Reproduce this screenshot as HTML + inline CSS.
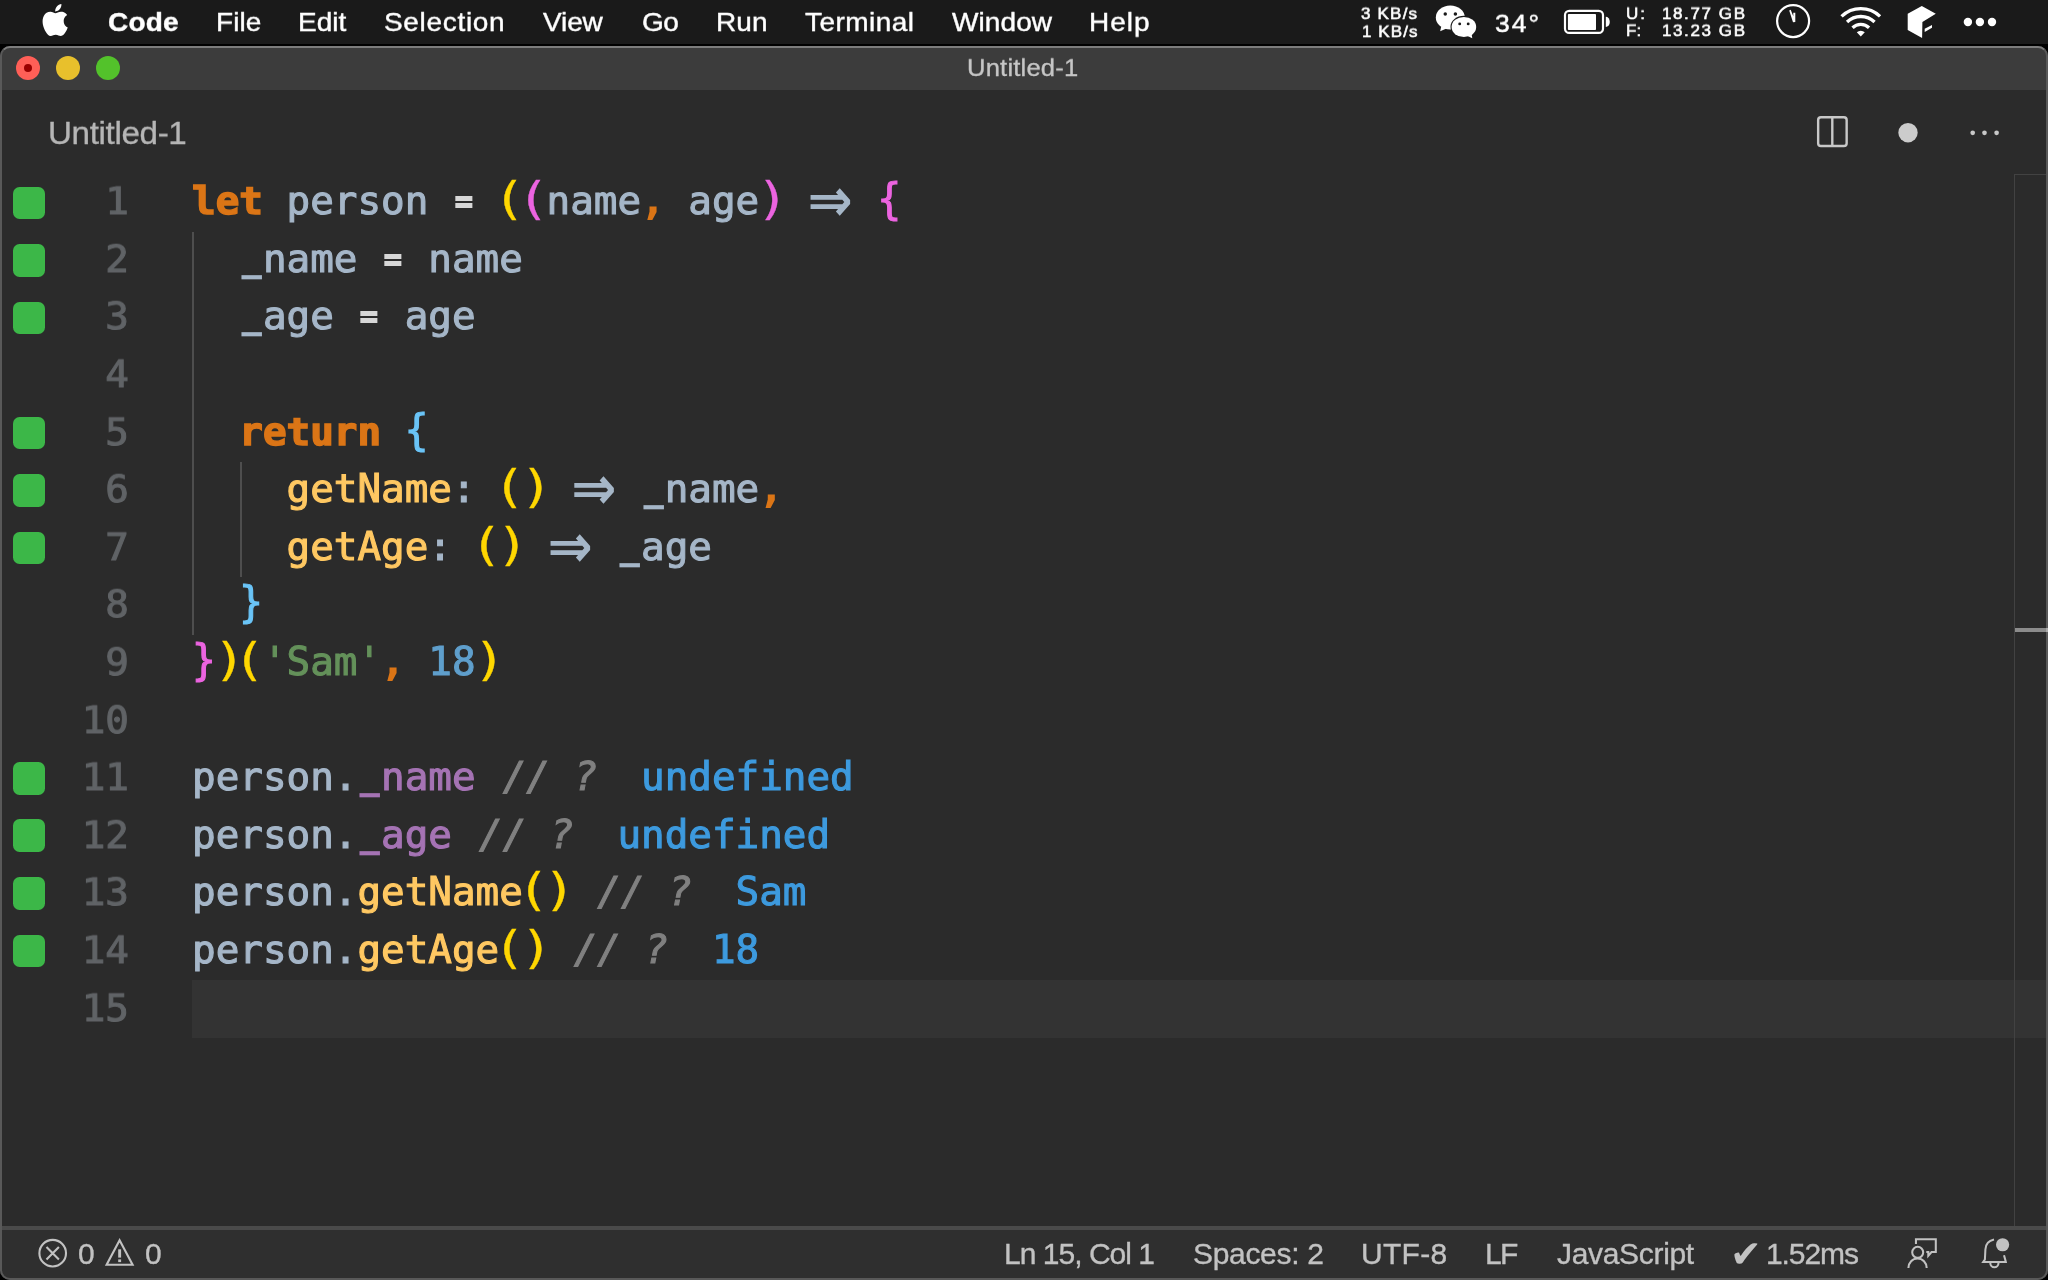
<!DOCTYPE html>
<html><head><meta charset="utf-8"><title>Untitled-1</title>
<style>
*{margin:0;padding:0;box-sizing:border-box}
html,body{width:2048px;height:1280px;overflow:hidden;background:#000}
body{position:relative;font-family:"Liberation Sans",sans-serif}
.abs{position:absolute}
#menubar{position:absolute;left:0;top:0;width:2048px;height:44px;background:#1a1a1a}
.t,.cl,.ln{will-change:transform}
.cl,.ln{-webkit-text-stroke:1.1px}
.kw{-webkit-text-stroke:1.5px}
.t{position:absolute;height:60px;line-height:60px;white-space:pre;font-family:"Liberation Sans",sans-serif}
#win{position:absolute;left:0;top:46px;width:2048px;height:1234px;background:#2b2b2b;border-radius:10px;overflow:hidden}
#winborder{position:absolute;left:0;top:46px;width:2048px;height:1234px;border-radius:10px;border:2px solid #595959;border-top-color:#7c7c7c}
#titlebar{position:absolute;left:0;top:0;width:100%;height:43.7px;background:#3c3c3c}
.tl{position:absolute;top:56px;width:24px;height:24px;border-radius:50%}
.cl{position:absolute;left:192px;height:57.6px;line-height:57.6px;font-family:"DejaVu Sans Mono","Liberation Mono",monospace;font-size:39.25px;white-space:pre;color:#a5b6c8}
.ln{position:absolute;left:41px;width:88px;text-align:right;height:57.6px;line-height:57.6px;font-family:"DejaVu Sans Mono","Liberation Mono",monospace;font-size:39.25px;color:#606366;transform:scaleY(0.945);transform-origin:50% 42.4px}
.sq{position:absolute;left:12.8px;width:32.5px;height:32.8px;border-radius:6.5px;background:#3cb748}
.kw{color:#db7516;font-weight:bold;display:inline-block;transform:translateY(0.5px) scaleY(0.95)}
.kwn{color:#db7516;-webkit-text-stroke:2.2px}
.var{color:#a5b6c8}
.op{color:#d7d7d7;display:inline-block;transform:translateY(-0.3px) scale(0.75,0.92);-webkit-text-stroke:2.4px}
.us{display:inline-block;transform:translate(0.8px,-2.6px) scaleX(0.78);-webkit-text-stroke:2.6px}
.gold{color:#ffd700}
.pink{color:#ec64e0}
.sky{color:#6ac4f7}
.fn{color:#ffc862}
.str{color:#64915a}
.num{color:#5f9fcc}
.prop{color:#a573b4}
.com{color:#808080;font-style:italic;display:inline-block;transform:translateX(3.5px)}
.res{color:#3d9ade}
.arw{display:inline-block;position:relative;width:2ch;height:1em;vertical-align:baseline;color:#a5b6c7}
.arw i{position:absolute;left:0;top:6px;width:100%;text-align:center;font-style:normal;font-family:"DejaVu Sans",sans-serif;font-weight:bold;font-size:54px;line-height:40px;-webkit-text-stroke:0;transform:scaleY(1.12);transform-origin:50% 50%}
.pl,.pr,.bc{display:inline-block}
.pl{transform:translate(-1.6px,-1.6px) scale(1.35,1.11);-webkit-text-stroke:0.3px}
.pr{transform:translate(1.6px,-1.6px) scale(1.35,1.11);-webkit-text-stroke:0.3px}
.bc{transform:translate(0,-1.8px) scale(1,1.1)}
.guide{position:absolute;width:2px;background:#4e4e4e}
#curline{position:absolute;left:192px;top:980px;width:1855px;height:58px;background:#333333}
#sbline{position:absolute;left:2014px;top:174px;width:1px;height:1052px;background:#424242}
#sbtop{position:absolute;left:2014px;top:174px;width:33px;height:1px;background:#424242}
#cursormark{position:absolute;left:2015px;top:628.2px;width:31px;height:4px;background:#8c8c8c}
#cursormark2{position:absolute;left:2046px;top:628.2px;width:2px;height:4px;background:#aaa}
#statusline{position:absolute;left:0;top:1180px;width:100%;height:4px;background:#4a4a4a}
#status{position:absolute;left:0;top:1184px;width:100%;height:50px;background:#2f2f2f}
#icons{position:absolute;left:0;top:0}
</style></head>
<body>
<div id="menubar"></div>
<div id="win">
 <div id="titlebar"></div>
 <div id="statusline"></div>
 <div id="status"></div>
</div>
<div class="tl" style="left:16px;background:#ff5f57"><div style="position:absolute;left:8px;top:8px;width:8px;height:8px;border-radius:50%;background:#990000"></div></div>
<div class="tl" style="left:56px;background:#e8c02c"></div>
<div class="tl" style="left:96px;background:#53c22b"></div>
<div id="curline"></div>
<div id="sbline"></div><div id="sbtop"></div><div id="cursormark"></div>
<div class="guide" style="left:192px;top:232px;height:402.5px"></div>
<div class="guide" style="left:239.5px;top:462.2px;height:115.2px"></div>
<div class="t" style="left:108.3px;top:-8.5px;font-size:28px;letter-spacing:0.23px;color:#fff;font-weight:bold;-webkit-text-stroke:0.45px;transform:scaleY(0.95);transform-origin:0 39.7px">Code</div>
<div class="t" style="left:216.0px;top:-8.5px;font-size:28px;letter-spacing:0.07px;color:#fff;-webkit-text-stroke:0.45px;transform:scaleY(0.95);transform-origin:0 39.7px">File</div>
<div class="t" style="left:297.8px;top:-8.5px;font-size:28px;letter-spacing:-0.03px;color:#fff;-webkit-text-stroke:0.45px;transform:scaleY(0.95);transform-origin:0 39.7px">Edit</div>
<div class="t" style="left:384.2px;top:-8.5px;font-size:28px;letter-spacing:0.68px;color:#fff;-webkit-text-stroke:0.45px;transform:scaleY(0.95);transform-origin:0 39.7px">Selection</div>
<div class="t" style="left:543.4px;top:-8.5px;font-size:28px;letter-spacing:-0.13px;color:#fff;-webkit-text-stroke:0.45px;transform:scaleY(0.95);transform-origin:0 39.7px">View</div>
<div class="t" style="left:642.0px;top:-8.5px;font-size:28px;letter-spacing:-0.6px;color:#fff;-webkit-text-stroke:0.45px;transform:scaleY(0.95);transform-origin:0 39.7px">Go</div>
<div class="t" style="left:716.0px;top:-8.5px;font-size:28px;letter-spacing:0.15px;color:#fff;-webkit-text-stroke:0.45px;transform:scaleY(0.95);transform-origin:0 39.7px">Run</div>
<div class="t" style="left:805.4px;top:-8.5px;font-size:28px;letter-spacing:0.46px;color:#fff;-webkit-text-stroke:0.45px;transform:scaleY(0.95);transform-origin:0 39.7px">Terminal</div>
<div class="t" style="left:951.5px;top:-8.5px;font-size:28px;letter-spacing:0.1px;color:#fff;-webkit-text-stroke:0.45px;transform:scaleY(0.95);transform-origin:0 39.7px">Window</div>
<div class="t" style="left:1089.0px;top:-8.5px;font-size:28px;letter-spacing:1.0px;color:#fff;-webkit-text-stroke:0.45px;transform:scaleY(0.95);transform-origin:0 39.7px">Help</div>
<div class="t" style="left:1361.0px;top:-16.4px;font-size:17px;letter-spacing:1.2px;color:#fff;-webkit-text-stroke:0.6px;transform:scaleY(0.96);transform-origin:0 35.9px">3 KB/s</div>
<div class="t" style="left:1361.6px;top:1.6px;font-size:17px;letter-spacing:1.08px;color:#fff;-webkit-text-stroke:0.6px;transform:scaleY(0.96);transform-origin:0 35.9px">1 KB/s</div>
<div class="t" style="left:1494.5px;top:-7.2px;font-size:26.5px;letter-spacing:2.05px;color:#fff;-webkit-text-stroke:0.5px;transform:scaleY(0.96);transform-origin:0 39.2px">34°</div>
<div class="t" style="left:1625.8px;top:-16.4px;font-size:17px;letter-spacing:2.0px;color:#fff;-webkit-text-stroke:0.6px;transform:scaleY(0.96);transform-origin:0 35.9px">U:</div>
<div class="t" style="left:1626.4px;top:1.4px;font-size:17px;letter-spacing:0.1px;color:#fff;-webkit-text-stroke:0.6px;transform:scaleY(0.96);transform-origin:0 35.9px">F:</div>
<div class="t" style="left:1662.4px;top:-16.4px;font-size:17px;letter-spacing:1.6px;color:#fff;-webkit-text-stroke:0.6px;transform:scaleY(0.96);transform-origin:0 35.9px">18.77 GB</div>
<div class="t" style="left:1662.4px;top:1.4px;font-size:17px;letter-spacing:1.6px;color:#fff;-webkit-text-stroke:0.6px;transform:scaleY(0.96);transform-origin:0 35.9px">13.23 GB</div>
<div class="t" style="left:966.6px;top:37.1px;font-size:25.6px;letter-spacing:0.19px;color:#c6c6c6;-webkit-text-stroke:0.35px;transform:scaleY(0.93);transform-origin:0 38.9px">Untitled-1</div>
<div class="t" style="left:47.5px;top:102.5px;font-size:33.2px;letter-spacing:-0.36px;color:#b6b6b6;-webkit-text-stroke:0.35px;transform:scaleY(0.96);transform-origin:0 41.5px">Untitled-1</div>
<div class="t" style="left:78.0px;top:1223.5px;font-size:30px;letter-spacing:0.0px;color:#c2c2c2;-webkit-text-stroke:0.35px">0</div>
<div class="t" style="left:144.5px;top:1223.5px;font-size:30px;letter-spacing:0.0px;color:#c2c2c2;-webkit-text-stroke:0.35px">0</div>
<div class="t" style="left:1003.6px;top:1223.5px;font-size:30px;letter-spacing:-0.98px;color:#c2c2c2;-webkit-text-stroke:0.35px">Ln 15, Col 1</div>
<div class="t" style="left:1193.0px;top:1223.5px;font-size:30px;letter-spacing:-0.32px;color:#c2c2c2;-webkit-text-stroke:0.35px">Spaces: 2</div>
<div class="t" style="left:1361.3px;top:1223.5px;font-size:30px;letter-spacing:0.3px;color:#c2c2c2;-webkit-text-stroke:0.35px">UTF-8</div>
<div class="t" style="left:1485.3px;top:1223.5px;font-size:30px;letter-spacing:-1.6px;color:#c2c2c2;-webkit-text-stroke:0.35px">LF</div>
<div class="t" style="left:1557.3px;top:1223.5px;font-size:30px;letter-spacing:-0.32px;color:#c2c2c2;-webkit-text-stroke:0.35px">JavaScript</div>
<div class="t" style="left:1765.7px;top:1223.5px;font-size:30px;letter-spacing:-1.08px;color:#c2c2c2;-webkit-text-stroke:0.35px">1.52ms</div>
<div class="t" style="left:1729.8px;top:1223.9px;font-family:'DejaVu Sans',sans-serif;font-size:37.9px;color:#c2c2c2">✔</div>
<div class="sq" style="top:186.5px"></div>
<div class="ln" style="top:172.2px">1</div>
<div class="cl" style="top:172.2px"><span class="kw">let</span><span class="var"> person </span><span class="op">=</span> <span class="gold pl">(</span><span class="pink pl">(</span><span class="var">name</span><span class="kwn">,</span><span class="var"> age</span><span class="pink pr">)</span> <span class="arw"><i>⇒</i></span> <span class="pink bc">{</span></div>
<div class="sq" style="top:244.0px"></div>
<div class="ln" style="top:229.8px">2</div>
<div class="cl" style="top:229.8px"><span class="var">  <span class="us">_</span>name </span><span class="op">=</span><span class="var"> name</span></div>
<div class="sq" style="top:301.6px"></div>
<div class="ln" style="top:287.4px">3</div>
<div class="cl" style="top:287.4px"><span class="var">  <span class="us">_</span>age </span><span class="op">=</span><span class="var"> age</span></div>
<div class="ln" style="top:345.0px">4</div>
<div class="sq" style="top:416.7px"></div>
<div class="ln" style="top:402.6px">5</div>
<div class="cl" style="top:402.6px">  <span class="kw">return</span> <span class="sky bc">{</span></div>
<div class="sq" style="top:474.2px"></div>
<div class="ln" style="top:460.2px">6</div>
<div class="cl" style="top:460.2px">    <span class="fn">getName</span><span class="var">:</span> <span class="gold pl">(</span><span class="gold pr">)</span> <span class="arw"><i>⇒</i></span><span class="var"> <span class="us">_</span>name</span><span class="kwn">,</span></div>
<div class="sq" style="top:531.7px"></div>
<div class="ln" style="top:517.8px">7</div>
<div class="cl" style="top:517.8px">    <span class="fn">getAge</span><span class="var">:</span> <span class="gold pl">(</span><span class="gold pr">)</span> <span class="arw"><i>⇒</i></span><span class="var"> <span class="us">_</span>age</span></div>
<div class="ln" style="top:575.4px">8</div>
<div class="cl" style="top:575.4px">  <span class="sky bc">}</span></div>
<div class="ln" style="top:633.0px">9</div>
<div class="cl" style="top:633.0px"><span class="pink bc">}</span><span class="gold pr">)</span><span class="gold pl">(</span><span class="str">'Sam'</span><span class="kwn">,</span> <span class="num">18</span><span class="gold pr">)</span></div>
<div class="ln" style="top:690.6px">10</div>
<div class="sq" style="top:761.9px"></div>
<div class="ln" style="top:748.2px">11</div>
<div class="cl" style="top:748.2px"><span class="var">person.</span><span class="prop"><span class="us">_</span>name</span> <span class="com">// ?</span>  <span class="res">undefined</span></div>
<div class="sq" style="top:819.4px"></div>
<div class="ln" style="top:805.8px">12</div>
<div class="cl" style="top:805.8px"><span class="var">person.</span><span class="prop"><span class="us">_</span>age</span> <span class="com">// ?</span>  <span class="res">undefined</span></div>
<div class="sq" style="top:877.0px"></div>
<div class="ln" style="top:863.4px">13</div>
<div class="cl" style="top:863.4px"><span class="var">person.</span><span class="fn">getName</span><span class="gold pl">(</span><span class="gold pr">)</span> <span class="com">// ?</span>  <span class="res">Sam</span></div>
<div class="sq" style="top:934.5px"></div>
<div class="ln" style="top:921.0px">14</div>
<div class="cl" style="top:921.0px"><span class="var">person.</span><span class="fn">getAge</span><span class="gold pl">(</span><span class="gold pr">)</span> <span class="com">// ?</span>  <span class="res">18</span></div>
<div class="ln" style="top:978.6px">15</div>
<div id="winborder"></div><div id="cursormark2"></div>
<svg id="icons" width="2048" height="1280" viewBox="0 0 2048 1280">
<!-- apple -->
<path fill="#fff" transform="translate(43.24,1.42) scale(1.10,1.145)" d="M18.6 17.2c0-3.600 2.900-5.300 3.100-5.400-1.700-2.400-4.300-2.800-5.200-2.800-2.200-.2-4.300 1.300-5.400 1.300s-2.800-1.300-4.700-1.200c-2.400 0-4.600 1.400-5.800 3.500-2.500 4.300-.6 10.600 1.800 14.100 1.200 1.700 2.600 3.600 4.400 3.500 1.800-.1 2.500-1.100 4.600-1.100 2.100 0 2.800 1.100 4.600 1.100 1.900 0 3.100-1.700 4.300-3.400 1.300-2 1.900-3.900 1.900-4-.1 0-3.600-1.400-3.600-5.600zM15.100 6.700c1-1.200 1.600-2.800 1.400-4.400-1.400.1-3.100.9-4.100 2.100-.9 1-1.700 2.700-1.500 4.300 1.600.1 3.200-.8 4.200-2z"/>
<!-- wechat -->
<g>
<ellipse cx="1450.3" cy="17.6" rx="14.5" ry="12" fill="#fff"/>
<path d="M1441.200 26.500 L1440.200 31.300 L1446.500 28.600 Z" fill="#fff"/>
<circle cx="1445.250" cy="13.9" r="1.75" fill="#1a1a1a"/><circle cx="1455.400" cy="13.9" r="1.75" fill="#1a1a1a"/>
<ellipse cx="1463.900" cy="27" rx="13.4" ry="11.2" fill="#1a1a1a"/>
<ellipse cx="1463.900" cy="27" rx="12.3" ry="10.100" fill="#fff"/>
<path d="M1466.500 35.500 L1472.300 38.200 L1471.500 33.500 Z" fill="#fff"/>
<circle cx="1459.700" cy="23.900" r="1.45" fill="#1a1a1a"/><circle cx="1468.200" cy="23.900" r="1.45" fill="#1a1a1a"/>
</g>
<!-- battery -->
<rect x="1565" y="10.900" width="38" height="22" rx="4.2" fill="none" stroke="#fff" stroke-width="2.2"/>
<rect x="1567.900" y="13.900" width="28.100" height="16.200" rx="0.8" fill="#fff"/>
<path d="M1605.800 16.800 A4 5.100 0 0 1 1605.800 27 Z" fill="#fff"/>
<!-- clock -->
<circle cx="1793.100" cy="21.050" r="16" fill="none" stroke="#fff" stroke-width="2.2"/>
<path d="M1789.200 10.400 L1790.700 9.800 L1793.300 16.200 L1793.300 12.800 L1795.300 12.800 L1795.300 22 L1793 22.200 Z" fill="#fff"/>
<!-- wifi -->
<g fill="none" stroke="#fff" stroke-width="3.3">
<path d="M1841.550 16.400 A27.700 27.700 0 0 1 1880.050 16.400"/>
<path d="M1847.040 22.060 A19.800 19.800 0 0 1 1874.560 22.060"/>
<path d="M1852.530 27.740 A11.900 11.900 0 0 1 1869.070 27.740"/>
</g>
<path d="M1860.800 36.500 L1856.800 32.300 A5.800 5.800 0 0 1 1864.800 32.300 Z" fill="#fff"/>
<!-- cube -->
<path d="M1921.800 5.900 L1935.800 13.800 L1922.400 22 L1922.100 38.100 L1907.700 29.900 L1907.700 13.800 Z" fill="#fff"/>
<path d="M1924.700 28.700 L1932 24.900 L1932 27.800 L1924.700 32.100 Z" fill="#fff"/>
<!-- dots -->
<circle cx="1967.900" cy="22" r="4.200" fill="#fff"/><circle cx="1979.900" cy="22" r="4.200" fill="#fff"/><circle cx="1992" cy="22" r="4.200" fill="#fff"/>
<!-- tab icons -->
<rect x="1818.150" y="117.260" width="28.500" height="28.740" rx="2.800" fill="none" stroke="#c8c8c8" stroke-width="2.400"/>
<line x1="1832.300" y1="117" x2="1832.300" y2="146.200" stroke="#c8c8c8" stroke-width="2.400"/>
<circle cx="1908" cy="132.700" r="9.700" fill="#cccccc"/>
<circle cx="1972.700" cy="132.800" r="2.350" fill="#c8c8c8"/><circle cx="1984.500" cy="132.800" r="2.350" fill="#c8c8c8"/><circle cx="1996.600" cy="132.800" r="2.350" fill="#c8c8c8"/>
<!-- status: error -->
<g fill="none" stroke="#c2c2c2" stroke-width="2.100">
<circle cx="52.700" cy="1253.200" r="13.300"/>
<path d="M46.500 1247.100 L58.900 1259.500 M58.900 1247.100 L46.500 1259.500"/>
<path d="M119.600 1240.200 L132.600 1264.800 L106.600 1264.800 Z" stroke-linejoin="miter"/>
</g>
<rect x="118.200" y="1249.300" width="2.900" height="8.300" fill="#c2c2c2"/><rect x="118.200" y="1259.400" width="2.900" height="2.700" fill="#c2c2c2"/>
<!-- feedback -->
<g fill="none" stroke="#c2c2c2" stroke-width="2.050">
<path d="M1915.950 1243.900 L1915.950 1239.300 L1935.800 1239.300 L1935.800 1252 L1931.500 1252 L1928.300 1255.800 L1928.300 1252 L1926.300 1252"/>
<circle cx="1917.700" cy="1252.300" r="5.500"/>
<path d="M1908.400 1268 A9.150 9.600 0 0 1 1926.700 1268"/>
</g>
<!-- bell -->
<g fill="none" stroke="#c2c2c2" stroke-width="2.050">
<path d="M1994 1239.600 C1988.500 1240.800 1985.600 1244.500 1985.400 1249.500 L1984.900 1259.500 L1983.200 1262 L2005.800 1262 L2005.200 1259.500 L2004 1255.300"/>
<path d="M1990.300 1263 A4.100 4.300 0 0 0 1998.500 1263"/>
</g>
<circle cx="2002.600" cy="1244.750" r="6.600" fill="#c2c2c2"/>

</svg>
</body></html>
